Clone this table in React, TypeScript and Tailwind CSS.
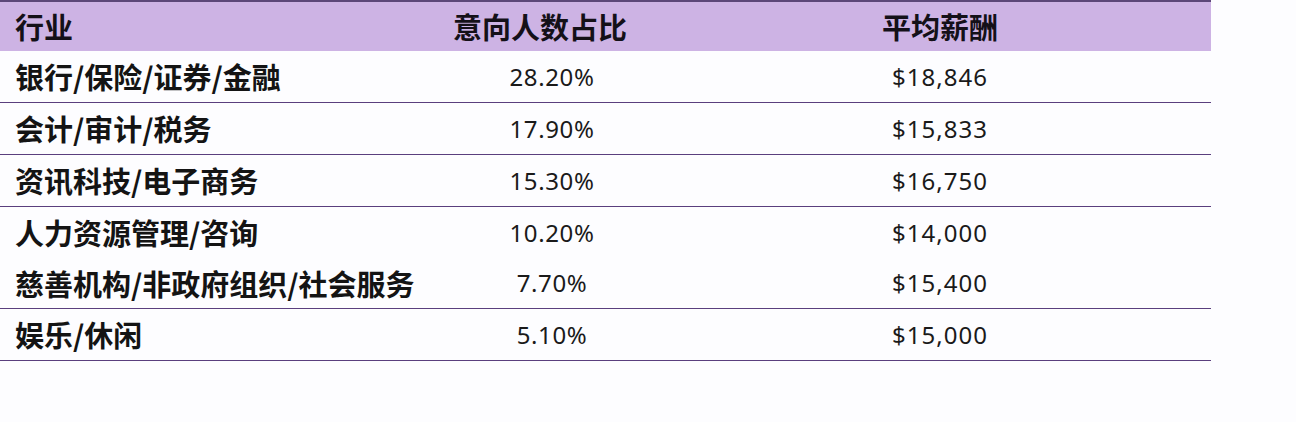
import React from "react";

const rows: { name: string; pct: string; pay: string; border: boolean; h: string }[] = [
  { name: "银行/保险/证券/金融", pct: "28.20%", pay: "$18,846", border: true, h: "h-[52px]" },
  { name: "会计/审计/税务", pct: "17.90%", pay: "$15,833", border: true, h: "h-[52px]" },
  { name: "资讯科技/电子商务", pct: "15.30%", pay: "$16,750", border: true, h: "h-[52px]" },
  { name: "人力资源管理/咨询", pct: "10.20%", pay: "$14,000", border: false, h: "h-[51px]" },
  { name: "慈善机构/非政府组织/社会服务", pct: "7.70%", pay: "$15,400", border: true, h: "h-[51px]" },
  { name: "娱乐/休闲", pct: "5.10%", pay: "$15,000", border: true, h: "h-[52px]" },
];

const cjk = { fontFamily: '"Noto Sans CJK SC", "Noto Sans", sans-serif' };
const num = { fontFamily: '"Noto Sans", "Open Sans", sans-serif' };

export default function App() {
  return (
    <div className="w-[1296px] h-[422px] bg-[#fdfdff] overflow-hidden">
      <div className="w-[1211px] border-t-2 border-[#5c4778]">
        <div
          className="grid grid-cols-[420px_264px_527px] h-[49px] bg-[#cdb3e4] text-[29px] font-bold text-[#141018] items-center"
          style={cjk}
        >
          <div className="pl-[15px] leading-none">行业</div>
          <div className="flex justify-center pr-[24px] leading-none">意向人数占比</div>
          <div className="flex justify-center pr-[15px] leading-none">平均薪酬</div>
        </div>
        {rows.map((r) => (
          <div
            key={r.name}
            className={`grid grid-cols-[420px_264px_527px] ${r.h} items-center ${
              r.border ? "border-b border-[#5a3f7e]" : ""
            }`}
          >
            <div
              className="pl-[15px] text-[29px] font-semibold text-[#141414] leading-none whitespace-nowrap"
              style={cjk}
            >
              {r.name}
            </div>
            <div
              className="flex justify-center text-[24px] tracking-[0.6px] text-[#1a1a1a] leading-none"
              style={num}
            >
              {r.pct}
            </div>
            <div
              className="flex justify-center pr-[15px] text-[24px] tracking-[1px] text-[#1a1a1a] leading-none"
              style={num}
            >
              {r.pay}
            </div>
          </div>
        ))}
      </div>
    </div>
  );
}
